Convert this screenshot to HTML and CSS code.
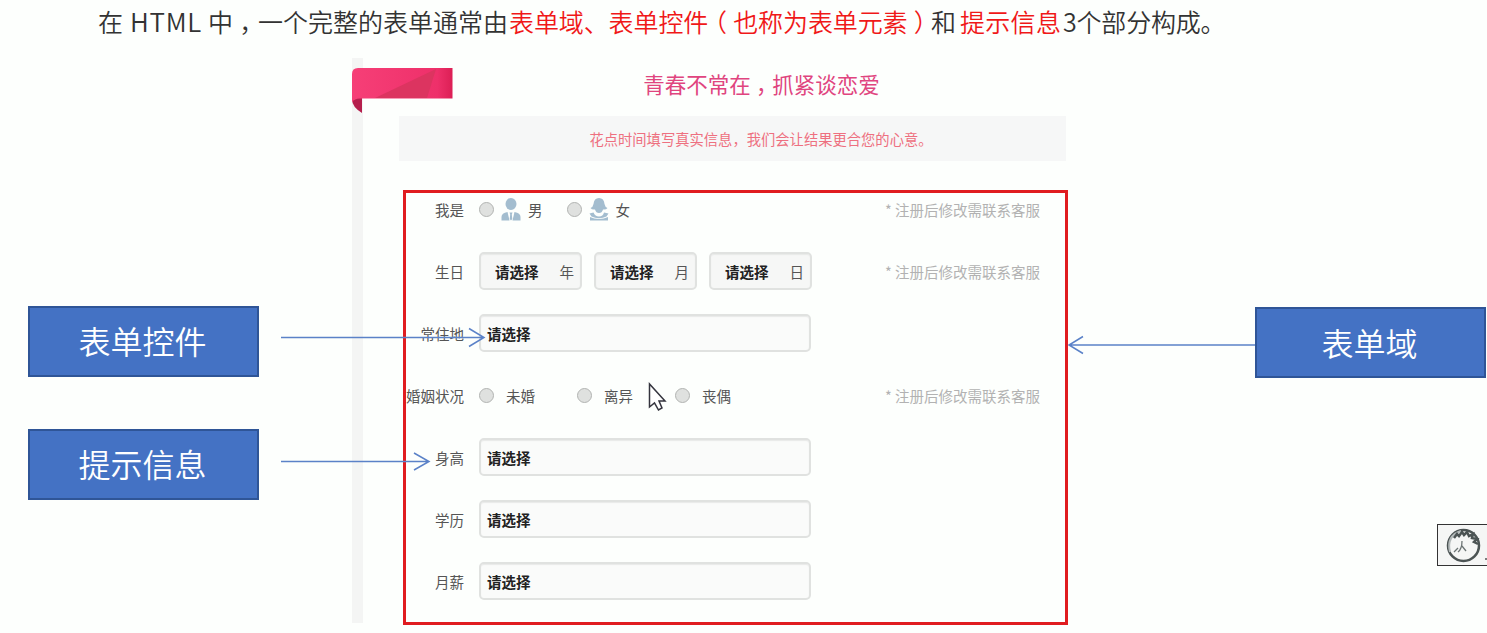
FILE: index.html
```
<!DOCTYPE html>
<html lang="zh-CN">
<head>
    <meta charset="UTF-8">
    <meta name="viewport" content="width=device-width, initial-scale=1.0">
    <title>表单的组成</title>
    <link rel="stylesheet" href="styles.css">
</head>
<body>
    <h2 class="intro"><span class="lead">在<span class="latin">HTML</span>中<span class="mark">，</span>一个完整的表单通常由</span><span class="red part1">表单域、表单控件<span class="mark">（</span>也称为表单元素<span class="mark">）</span></span><span class="and">和</span><span class="red part2">提示信息</span><span class="end">3个部分构成。</span></h2>

    <div class="stage">
        <div class="side left">
            <div class="tag">表单控件</div>
            <div class="tag">提示信息</div>
        </div>

        <div class="card">
            <svg class="ribbon" width="101" height="46" viewBox="0 0 101 46">
                <defs>
                    <linearGradient id="pink" x1="0" x2="1" y1="0" y2="0">
                        <stop offset="0" stop-color="#f63f77"/>
                        <stop offset="0.85" stop-color="#ee306a"/>
                        <stop offset="1" stop-color="#dc1f55"/>
                    </linearGradient>
                </defs>
                <path d="M0 29H10V45Q0 39 0 31Z" fill="#b51f4d"/>
                <path d="M0 31V6Q0 0 6 0H100.500V30.500H9Q3 30 0 34Z" fill="url(#pink)"/>
                <path d="M23 30L84 1L75 30Z" fill="#dc3460"/>
            </svg>
            <div class="card-body">
                <h3 class="title">青春不常在<span class="mark">，</span>抓紧谈恋爱</h3>
                <p class="notice">花点时间填写真实信息，我们会让结果更合您的心意。</p>

                <form class="form">
                    <div class="row first">
                        <label class="name">我是</label>
                        <div class="field">
                            <i class="radio"></i>
                            <svg class="person" width="20" height="24" viewBox="0 0 20 24">
                                <ellipse cx="10" cy="6" rx="5.5" ry="6"/>
                                <path d="M0.500 22.500V19Q0.500 15 6.500 14L8.500 22.500Z"/>
                                <path d="M19.500 22.500V19Q19.500 15 13.500 14L11.500 22.500Z"/>
                                <path d="M8.500 14.500H11.500L10.800 16.500L11.300 21L10 22.500L8.700 21L9.200 16.500Z"/>
                            </svg>
                            <span class="sex">男</span>
                            <i class="radio female"></i>
                            <svg class="person" width="20" height="24" viewBox="0 0 20 24">
                                <path d="M4.500 6Q5 0 10 0T15.500 6Q16 9 18.500 10Q17 12 14 11.500Q13 15 10 15T6 11.500Q3 12 1.500 10Q4 9 4.500 6Z"/>
                                <path d="M0.500 15.500L4.500 14.500Q6 18.500 10 18.500T15 14.500L19.500 15.500L17.500 18.500Q14 20.200 10 20.200T2.500 18.500Z"/>
                                <path d="M1 19Q5 21 10 21T19 19V22.500H1Z"/>
                            </svg>
                            <span class="sex">女</span>
                        </div>
                        <span class="hint">* 注册后修改需联系客服</span>
                    </div>
                    <div class="row">
                        <label class="name">生日</label>
                        <div class="field dates">
                            <div class="select small"><b>请选择</b><span>年</span></div>
                            <div class="select small"><b>请选择</b><span>月</span></div>
                            <div class="select small"><b>请选择</b><span>日</span></div>
                        </div>
                        <span class="hint">* 注册后修改需联系客服</span>
                    </div>
                    <div class="row">
                        <label class="name">常住地</label>
                        <div class="select"><b>请选择</b></div>
                    </div>
                    <div class="row">
                        <label class="name">婚姻状况</label>
                        <div class="field marriage">
                            <div class="option"><i class="radio"></i>未婚</div>
                            <div class="option"><i class="radio"></i>离异</div>
                            <div class="option"><i class="radio"></i>丧偶</div>
                        </div>
                        <span class="hint">* 注册后修改需联系客服</span>
                    </div>
                    <div class="row">
                        <label class="name">身高</label>
                        <div class="select"><b>请选择</b></div>
                    </div>
                    <div class="row">
                        <label class="name">学历</label>
                        <div class="select"><b>请选择</b></div>
                    </div>
                    <div class="row">
                        <label class="name">月薪</label>
                        <div class="select"><b>请选择</b></div>
                    </div>
                </form>
            </div>
        </div>

        <div class="side right">
            <div class="tag">表单域</div>
            <div class="recorder">
                <svg width="49" height="40" viewBox="0 0 49 40" fill="none">
                    <circle cx="25.500" cy="20.500" r="15.500" stroke="#4c5454" stroke-width="2.500"/>
                    <path d="M12 27Q8 11 23 6" stroke="#b4baba" stroke-width="2"/>
                    <path d="M16 13L19 9L21 11L24 7L26 10L29 7L31 11L35 9L34 13L39 14L36 17L40 19" stroke="#4c5454" stroke-width="2.500"/>
                    <path d="M16 27L20 23M20 27Q24 24 24 16M24 21L28 26" stroke="#6c7474" stroke-width="1.300"/>
                    <circle cx="48" cy="34" r="1" fill="#555"/>
                </svg>
            </div>
        </div>
    </div>

    <!-- 箭头和鼠标 -->
    <svg class="arrows" width="1487" height="633" viewBox="0 0 1487 633">
        <g fill="none" stroke="#5b82c8" stroke-width="1.500">
            <path d="M281 337.500H484M469 328.500L484 337.500L469 346.500"/>
            <path d="M281 461.500H429M414 453L429 461.500L414 470"/>
            <path d="M1255 345H1069M1083 336.500L1069 345L1083 353.500"/>
        </g>
        <path d="M649.500 384V407L654.500 403L658.500 410L662 408L659 401H665Z" fill="#fff" stroke="#34343e" stroke-width="1.500"/>
    </svg>
</body>
</html>
```
FILE: styles.css
```
body {
    margin: 0;
    height: 633px;
    overflow: hidden;
    position: relative;
    background: #fdfffd;
    color: #555;
    font-family: "Noto Sans CJK SC", sans-serif;
    font-size: 14.5px;
}
.intro {
    height: 58px;
    margin: 0;
    padding-left: 98px;
    box-sizing: border-box;
    display: flex;
    color: #333;
    font-size: 25px;
    font-weight: 350;
    line-height: 43px;
    white-space: nowrap;
}
.red {
    color: #f01818;
}
.lead {
    width: 411px;
}
.latin {
    display: inline-block;
    width: 78px;
    padding-left: 7px;
    font-size: 26px;
    line-height: 40px;
    letter-spacing: 0.7px;
}
/* 标点居中 */
.mark {
    display: inline-block;
    width: 1em;
    text-align: center;
    font-feature-settings: "halt";
}
.part1 {
    width: 422px;
    letter-spacing: -0.1px;
}
.and {
    width: 29px;
}
.part2 {
    width: 103px;
    letter-spacing: 0.3px;
}
.end {
    letter-spacing: -0.2px;
}
.stage {
    display: grid;
    grid-template-columns: 352px 716px 419px;
    height: 565px;
}
.left {
    padding: 248px 0 0 28px;
}
.right {
    display: flex;
    flex-direction: column;
    align-items: flex-end;
    padding-top: 249px;
}
.tag {
    width: 231px;
    height: 71px;
    box-sizing: border-box;
    margin-bottom: 52px;
    padding-right: 2px;
    border: 2px solid #2f5597;
    background: #4472c4;
    color: #fff;
    font-size: 32px;
    font-weight: 350;
    line-height: 64px;
    text-align: center;
}
.right .tag {
    margin: 0 1px 146px 0;
    line-height: 67px;
}
.recorder {
    width: 50px;
    height: 42px;
    flex: none;
    box-sizing: border-box;
    border: 1.5px solid #333;
    border-right: 0;
    background: #f5f6f5;
}
.card {
    display: flex;
    align-items: flex-start;
    height: 565px;
    background: linear-gradient(#f4f5f4, #f4f5f4) no-repeat 0 0 / 11px 100%;
}
.ribbon {
    flex: none;
    margin-top: 10px;
    margin-right: -54px;
}
.card-body {
    width: 669px;
}
.title {
    height: 58px;
    margin: 0;
    padding-left: 56px;
    color: #e0457f;
    font-size: 21.5px;
    font-weight: 400;
    line-height: 52px;
    text-align: center;
}
.notice {
    width: 667px;
    height: 45px;
    margin: 0 0 29px;
    background: #f6f7f7;
    color: #ee7080;
    font-size: 14.3px;
    line-height: 46px;
    text-align: center;
    text-indent: 57px;
}
.form {
    width: 665px;
    height: 435px;
    box-sizing: border-box;
    margin-left: 4px;
    border: 3px solid #e01c20;
}
.row {
    display: flex;
    align-items: center;
    height: 38px;
    margin-bottom: 24px;
}
.first {
    height: 33px;
    margin-bottom: 26px;
}
.name {
    width: 58px;
    margin-right: 15px;
    text-align: right;
    white-space: nowrap;
}
.field {
    display: flex;
    align-items: center;
}
.radio {
    width: 15px;
    height: 15px;
    flex: none;
    box-sizing: border-box;
    border: 1.5px solid #b2b4b2;
    border-radius: 50%;
    background: #dfe1df;
}
.female {
    margin-left: 24px;
}
.person {
    margin: 0 7px;
    fill: #a3bdcf;
}
.dates {
    gap: 12px;
}
.option {
    width: 98px;
    display: flex;
    align-items: center;
    gap: 12px;
}
.hint {
    margin-left: auto;
    margin-right: 25px;
    color: #b2b2b2;
    font-size: 14.5px;
}
.select {
    width: 332px;
    height: 38px;
    box-sizing: border-box;
    padding: 0 6px;
    border: 2px solid #e0e2e0;
    border-radius: 5px;
    background: #fafbfa;
    box-shadow: inset 0 1px 1px #e8e9e8;
    display: flex;
    align-items: center;
    justify-content: space-between;
}
.select b {
    color: #222;
    font-weight: 700;
}
.small {
    width: 103px;
    padding: 0 6px 0 14px;
    background: #f6f7f6;
}
.arrows {
    position: absolute;
    top: 0;
    left: 0;
}
```
